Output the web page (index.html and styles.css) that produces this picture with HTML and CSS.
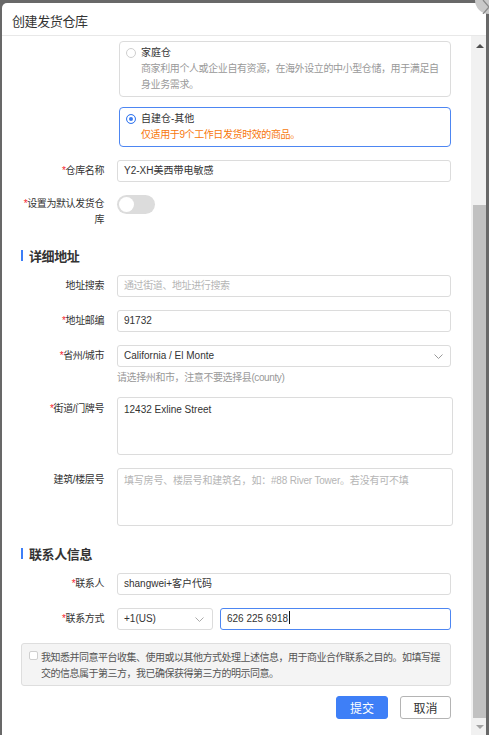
FILE: index.html
```html
<!DOCTYPE html>
<html lang="zh-CN">
<head>
  <meta charset="UTF-8" />
  <title>创建发货仓库</title>
  <link rel="stylesheet" href="styles.css">
</head>
<body>
  <div class="modal">
    <!-- close button sits half outside the dialog corner -->
    <button class="modal-close" aria-label="关闭">
      <svg width="28" height="28" viewBox="0 0 28 28">
        <path d="M8 14 L14 21 L8 28" fill="none" stroke="#8a8a8a" stroke-width="1.2" />
      </svg>
    </button>

    <div class="modal-header">创建发货仓库</div>

    <div class="modal-main">
      <div class="modal-body">
        <!-- Warehouse type -->
        <div class="radio-card">
          <span class="radio"></span>
          <div class="radio-card-text">
            <div class="radio-card-title">家庭仓</div>
            <div class="radio-card-desc">商家利用个人或企业自有资源，在海外设立的中小型仓储，用于满足自身业务需求。</div>
          </div>
        </div>
        <div class="radio-card checked">
          <span class="radio"></span>
          <div class="radio-card-text">
            <div class="radio-card-title">自建仓-其他</div>
            <div class="radio-card-tip">仅适用于9个工作日发货时效的商品。</div>
          </div>
        </div>

        <div class="form-item">
          <label class="form-label"><span class="req">*</span>仓库名称</label>
          <div class="form-control">
            <div class="input">Y2-XH美西带电敏感</div>
          </div>
        </div>

        <div class="form-item">
          <label class="form-label form-label-switch"><span class="req">*</span>设置为默认发货仓库</label>
          <div class="form-control">
            <span class="switch"><span class="switch-knob"></span></span>
          </div>
        </div>

        <!-- Address -->
        <div class="section-title">详细地址</div>

        <div class="form-item">
          <label class="form-label">地址搜索</label>
          <div class="form-control">
            <div class="input placeholder">通过街道、地址进行搜索</div>
          </div>
        </div>

        <div class="form-item">
          <label class="form-label"><span class="req">*</span>地址邮编</label>
          <div class="form-control">
            <div class="input">91732</div>
          </div>
        </div>

        <div class="form-item">
          <label class="form-label"><span class="req">*</span>省州/城市</label>
          <div class="form-control">
            <div class="input select">
              <span>California / El Monte</span>
              <svg class="chevron" width="9" height="5" viewBox="0 0 9 5"><path d="M0.5 0.5 L4.5 4.5 L8.5 0.5" fill="none" stroke="#999" /></svg>
            </div>
            <div class="form-help">请选择州和市，注意不要选择县(county)</div>
          </div>
        </div>

        <div class="form-item">
          <label class="form-label form-label-area"><span class="req">*</span>街道/门牌号</label>
          <div class="form-control">
            <div class="textarea">12432 Exline Street</div>
          </div>
        </div>

        <div class="form-item">
          <label class="form-label form-label-area">建筑/楼层号</label>
          <div class="form-control">
            <div class="textarea textarea-placeholder">填写房号、楼层号和建筑名，如：#88 River Tower。若没有可不填</div>
          </div>
        </div>

        <!-- Contact -->
        <div class="section-title">联系人信息</div>

        <div class="form-item">
          <label class="form-label"><span class="req">*</span>联系人</label>
          <div class="form-control">
            <div class="input">shangwei+客户代码</div>
          </div>
        </div>

        <div class="form-item">
          <label class="form-label"><span class="req">*</span>联系方式</label>
          <div class="form-control phone-row">
            <div class="input select area-code">
              <span>+1(US)</span>
              <svg class="chevron" width="9" height="5" viewBox="0 0 9 5"><path d="M0.5 0.5 L4.5 4.5 L8.5 0.5" fill="none" stroke="#aaa" /></svg>
            </div>
            <div class="input focused">626 225 6918<span class="caret"></span></div>
          </div>
        </div>

        <div class="agreement">
          <span class="checkbox"></span>
          <p>我知悉并同意平台收集、使用或以其他方式处理上述信息，用于商业合作联系之目的。如填写提交的信息属于第三方，我已确保获得第三方的明示同意。</p>
        </div>

        <div class="form-actions">
          <button class="btn btn-primary">提交</button>
          <button class="btn">取消</button>
        </div>
      </div>

      <!-- scrollbar of the dialog body -->
      <div class="scrollbar">
        <div class="scroll-arrow"><span class="tri-up"></span></div>
        <div class="scroll-track"><div class="scroll-thumb"></div></div>
        <div class="scroll-arrow"><span class="tri-down"></span></div>
      </div>
    </div>
  </div>
</body>
</html>
```

FILE: styles.css
```css
/********************************************************
 * Page + dialog shell
 ********************************************************/
* {
  box-sizing: border-box;
}

body {
  margin: 0;
  height: 735px;
  overflow: hidden;
  background-color: #686868; /* dimmed page behind dialog */
  font-family: "Liberation Sans", "Noto Sans CJK SC", sans-serif;
  font-size: 10px;
  color: #333;
}

/* chinese runs set a touch tighter */
.modal-header,
.section-title,
.form-label,
.radio-card-desc,
.radio-card-tip,
.form-help,
.placeholder {
  letter-spacing: -0.4px;
}

.modal {
  position: relative;
  margin: 3px 3px 0 2px;
  height: 732px;
  background-color: #fff;
  border-radius: 5px 5px 0 0;
  display: flex;
  flex-direction: column;
}

.modal-close {
  position: absolute;
  top: -17px;
  right: -17px;
  width: 28px;
  height: 28px;
  padding: 0;
  border: none;
  border-radius: 50%;
  background-color: #c9c9c9;
  cursor: pointer;
}
.modal-close svg {
  display: block;
}

.modal-header {
  flex: none;
  height: 33px;
  padding: 3px 10px 0;
  display: flex;
  align-items: center;
  border-bottom: 1px solid #e8e8e8;
  font-size: 13px;
  color: #333;
}

.modal-main {
  flex: 1;
  min-height: 0;
  display: flex;
  overflow: hidden;
}

.modal-body {
  flex: 1;
  padding: 5px 20px 0 14px;
}

/********************************************************
 * Scrollbar
 ********************************************************/
.scrollbar {
  flex: none;
  width: 15px;
  display: flex;
  flex-direction: column;
  background-color: #f1f1f1;
}
.scroll-arrow {
  height: 17px;
  display: flex;
  align-items: center;
  justify-content: center;
  padding-left: 2px;
}
.scroll-arrow:first-child {
  padding-top: 3px;
}
.tri-up {
  border-left: 4px solid transparent;
  border-right: 4px solid transparent;
  border-bottom: 4px solid #505050;
}
.tri-down {
  border-left: 4px solid transparent;
  border-right: 4px solid transparent;
  border-top: 4px solid #a3a3a3;
}
.scroll-track {
  flex: 1;
  display: flex;
  padding: 152px 0 0 2px;
}
.scroll-thumb {
  flex: 1;
  background-color: #c1c1c1;
}

/********************************************************
 * Warehouse type cards
 ********************************************************/
.radio-card {
  margin: 0 0 10px 103px;
  padding: 3px 6px 3px 6px;
  border: 1px solid #dcdcdc;
  border-radius: 4px;
  display: flex;
  gap: 5px;
  line-height: 16px;
}
.radio-card.checked {
  margin-bottom: 13px;
  border-color: #4d86f2;
}
.radio {
  flex: none;
  width: 10px;
  height: 10px;
  margin-top: 3px;
  border: 1px solid #cfcfcf;
  border-radius: 50%;
  background-color: #fff;
}
.radio-card.checked .radio {
  border-color: #3c7cf0;
  background-color: #3c7cf0;
  box-shadow: inset 0 0 0 2px #fff;
}
.radio-card-title {
  color: #333;
}
.radio-card-desc {
  color: #999;
}
.radio-card-tip {
  color: #f7780c;
}

/********************************************************
 * Form rows
 ********************************************************/
.form-item {
  display: flex;
  margin-bottom: 13px;
}

.form-label {
  flex: none;
  width: 88px;
  margin-right: 13px;
  padding-top: 3px;
  text-align: right;
  line-height: 16px;
  color: #333;
}
.form-label-switch {
  padding-top: 1px;
}
.form-label-area {
  padding-top: 4px;
}
.req {
  color: #f5222d;
}

.form-control {
  flex: 1;
  min-width: 0;
}

.input {
  height: 22px;
  padding: 0 6px;
  border: 1px solid #dcdcdc;
  border-radius: 3px;
  line-height: 20px;
  color: #333;
  white-space: nowrap;
}
.placeholder {
  color: #b5b5b5;
}
.input.focused {
  border-color: #4d86f2;
}
.caret {
  display: inline-block;
  width: 1px;
  height: 13px;
  margin-left: 1px;
  vertical-align: -2px;
  background-color: #111;
}

.select {
  display: flex;
  align-items: center;
  justify-content: space-between;
  padding-right: 7px;
}
.chevron {
  flex: none;
}

.form-help {
  margin: 4px 0 -1px;
  line-height: 14px;
  color: #999;
}

.textarea {
  width: calc(100% + 2px);
  height: 58px;
  padding: 4px 6px;
  border: 1px solid #dcdcdc;
  border-radius: 3px;
  line-height: 16px;
}
.textarea-placeholder {
  color: #b5b5b5;
  letter-spacing: -0.2px;
}

.switch {
  display: block;
  position: relative;
  width: 38px;
  height: 19px;
  border-radius: 10px;
  background-color: #dcdcdc;
}
.switch-knob {
  position: absolute;
  top: 2px;
  left: 2px;
  width: 15px;
  height: 15px;
  border-radius: 50%;
  background-color: #fff;
}

.phone-row {
  display: flex;
  gap: 7px;
}
.phone-row .area-code {
  flex: none;
  width: 96px;
  padding-right: 8px;
}
.phone-row .focused {
  flex: 1;
}

/********************************************************
 * Section titles
 ********************************************************/
.section-title {
  height: 24px;
  margin: 0 0 10px 5px;
  padding-top: 4px;
  display: flex;
  align-items: center;
  font-size: 13px;
  font-weight: bold;
  color: #333;
}
.section-title::before {
  content: "";
  width: 2px;
  height: 11px;
  margin-right: 6px;
  background-color: #3d7ef7;
}

/********************************************************
 * Agreement + actions
 ********************************************************/
.agreement {
  margin-left: 5px;
  padding: 6px 3px 3px 7px;
  display: flex;
  gap: 3px;
  background-color: #f4f4f4;
  border: 1px solid #dedede;
  border-radius: 3px;
}
.agreement p {
  margin: 0;
  line-height: 16px;
  letter-spacing: -0.5px;
  color: #555;
}
.checkbox {
  flex: none;
  width: 9px;
  height: 9px;
  margin-top: 1px;
  border: 1px solid #cfcfcf;
  border-radius: 2px;
  background-color: #fff;
}

.form-actions {
  display: flex;
  justify-content: flex-end;
  gap: 12px;
  margin-top: 10px;
}

.btn {
  width: 51px;
  height: 23px;
  padding: 0;
  border: 1px solid #b4b4b4;
  border-radius: 3px;
  background-color: #fff;
  font-family: inherit;
  font-size: 12px;
  color: #333;
  cursor: pointer;
}
.btn-primary {
  width: 52px;
  border-color: #3e7ff7;
  background-color: #3e7ff7;
  color: #fff;
}
```
